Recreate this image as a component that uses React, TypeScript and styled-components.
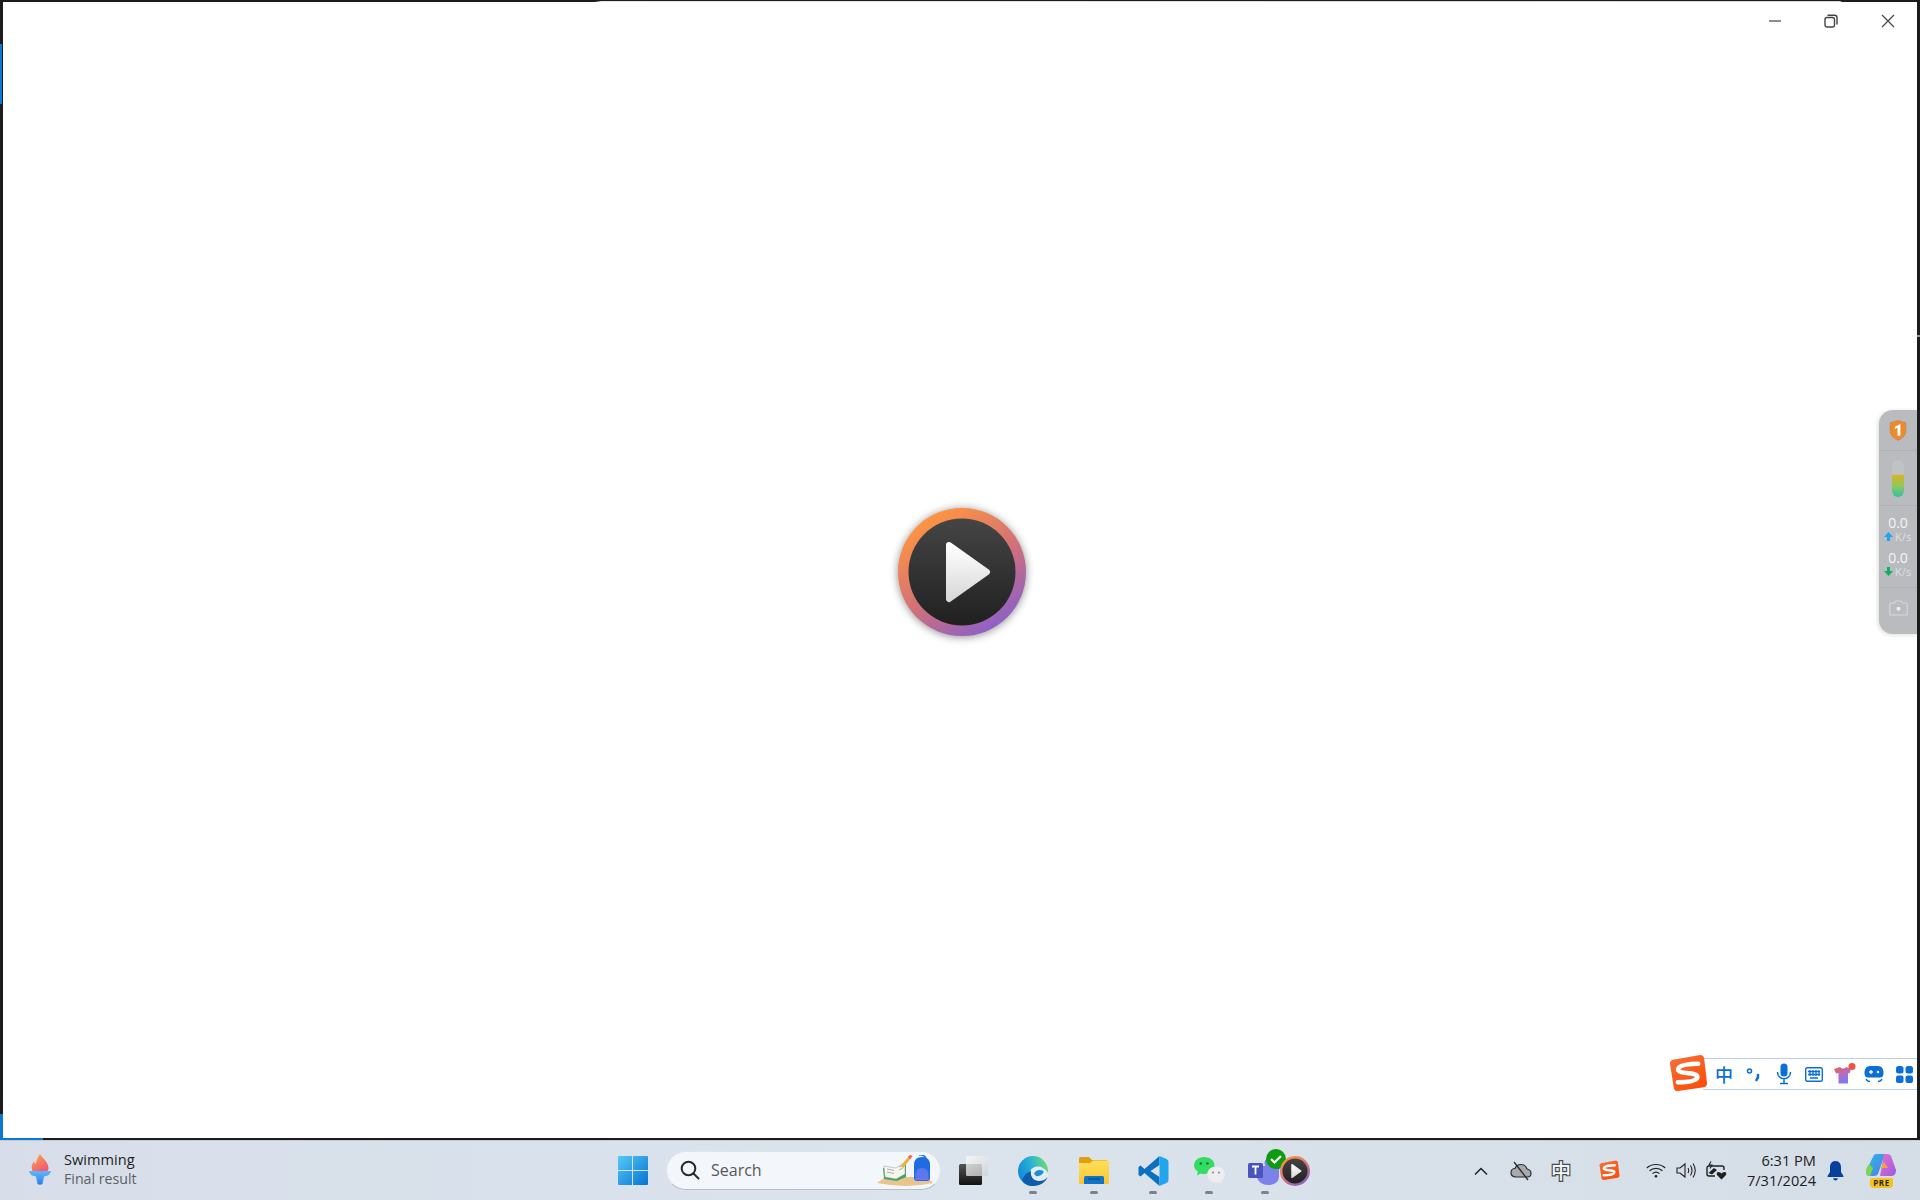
import { useId } from 'react';
import styled, { createGlobalStyle } from 'styled-components';

const GlobalStyle = createGlobalStyle`
  html, body { margin: 0; padding: 0; height: 100%; overflow: hidden; background: #fff; }
  #root { height: 100%; }
  * { box-sizing: border-box; }
`;

const Page = styled.div`
  height: 1200px;
  display: flex;
  flex-direction: column;
  font-family: "Open Sans", "Noto Sans", "Liberation Sans", sans-serif;
`;

const Window = styled.main`
  position: relative;
  height: 1140px;
  display: flex;
  flex-direction: column;
  background: #fff;
  border-style: solid;
  border-color: #1c1c1c;
  border-width: 2px 3px 2px 3px;
`;

const TitleRow = styled.div`
  height: 38px;
  display: flex;
  justify-content: flex-end;
  padding-right: 1px;
`;

const WinButton = styled.button`
  width: 56.5px;
  border: 0;
  padding: 0;
  background: none;
  display: flex;
  align-items: center;
  justify-content: center;
  color: #444;
`;

const Stage = styled.div`
  flex: 1;
  display: flex;
  align-items: center;
  justify-content: center;
  padding: 0 0 34px 4px;
`;

const PlaySvg = styled.svg<{ $shadow?: boolean }>`
  display: block;
  overflow: visible;
  ${(p) => (p.$shadow ? 'filter: drop-shadow(0 1px 4px rgba(0, 0, 0, 0.45));' : '')}
`;

const TopSheen = styled.div`
  position: absolute;
  top: -1px;
  left: 592px;
  right: 0;
  height: 1px;
  background: linear-gradient(90deg, #1c1c1c 0, #e6e6e6 6px, #d8d8d8 1245px, #1c1c1c 1247px);
`;

const FocusBarLeft = styled.div`
  position: absolute;
  left: -3px;
  top: 42px;
  width: 2px;
  height: 60px;
  background: #0a78d7;
`;

const CornerLeft = styled.div`
  position: absolute;
  left: -3px;
  top: 1112px;
  width: 3px;
  height: 24px;
  background: #0a78d7;
`;

const CornerBottom = styled.div`
  position: absolute;
  left: -3px;
  bottom: -2px;
  width: 43px;
  height: 2px;
  background: #0a78d7;
`;

const RightTick = styled.div`
  position: absolute;
  right: -3px;
  top: 333px;
  width: 3px;
  height: 2px;
  background: #999;
`;

const SidePanel = styled.aside`
  position: absolute;
  top: 408px;
  right: 0;
  width: 38px;
  height: 224px;
  background: #b9bbbf;
  border-radius: 14px 0 0 14px;
  box-shadow: -1px 1px 4px rgba(0, 0, 0, 0.14);
  display: flex;
  flex-direction: column;
  overflow: hidden;
`;

const SideSection = styled.div<{ $h: number; $pb?: number; $last?: boolean }>`
  height: ${(p) => p.$h}px;
  flex: none;
  display: flex;
  flex-direction: column;
  align-items: center;
  justify-content: center;
  padding-bottom: ${(p) => p.$pb ?? 0}px;
  border-bottom: ${(p) => (p.$last ? '0' : '1px solid #adb3b5')};
`;

const Thermo = styled.div`
  width: 12px;
  height: 37px;
  border-radius: 6px;
  background: linear-gradient(180deg, #c0c2c6 0 39%, #dcb224 40%, #8fc85a 70%, #2fc3a8 100%);
`;

const Speed = styled.div`
  width: 100%;
  display: flex;
  flex-direction: column;
  align-items: center;
  color: #f6f6f6;
  font-size: 14px;
  line-height: 15px;
  margin-top: 7px;
`;

const Unit = styled.div`
  display: flex;
  align-items: center;
  gap: 2px;
  color: #dcdee1;
  font-size: 11.5px;
  line-height: 13px;
  white-space: nowrap;
  margin-left: -1px;
`;

const ImeBar = styled.div`
  position: absolute;
  right: 0;
  top: 1056px;
  width: 214px;
  height: 32px;
  background: #fff;
  border-style: solid;
  border-color: #c0d0e4;
  border-width: 1px 0;
  display: flex;
  align-items: center;
  padding-left: 6px;
  color: #0a6fd6;
`;

const ImeLogo = styled.div`
  position: absolute;
  left: -34px;
  top: -5px;
  width: 39px;
  height: 37px;
`;

const ImeSlot = styled.div`
  width: 30px;
  flex: none;
  display: flex;
  align-items: center;
  justify-content: center;
  position: relative;
`;

const ImeChar = styled.span`
  font-family: "Noto Sans CJK SC", "Noto Sans", sans-serif;
  font-size: 18px;
  font-weight: 500;
  line-height: 20px;
  color: #0a6fd6;
`;

const Taskbar = styled.footer`
  height: 60px;
  display: flex;
  align-items: stretch;
  background: linear-gradient(90deg, #d8dee9 0%, #d9e2ec 30%, #dbe3ec 50%, #d5dee7 100%);
  border-top: 1px solid #c6cbd2;
`;

const Widget = styled.div`
  width: 610px;
  flex: none;
  display: flex;
  align-items: center;
  gap: 13px;
  padding: 0 0 3px 29px;
`;

const WidgetText = styled.div`
  display: flex;
  flex-direction: column;
`;

const WidgetTitle = styled.span`
  font-size: 14.6px;
  line-height: 20px;
  color: #1d1f22;
`;

const WidgetSub = styled.span`
  font-size: 14.2px;
  line-height: 20px;
  color: #5c6066;
`;

const Slot = styled.div<{ $w: number; $mr?: number }>`
  position: relative;
  width: ${(p) => p.$w}px;
  margin-right: ${(p) => p.$mr ?? 0}px;
  flex: none;
  display: flex;
  align-items: center;
  justify-content: center;
`;

const Running = styled.span`
  position: absolute;
  bottom: 6px;
  left: 50%;
  margin-left: -4px;
  width: 8px;
  height: 3px;
  border-radius: 2px;
  background: #7d828a;
`;

const SearchBox = styled.div`
  width: 275px;
  height: 39px;
  flex: none;
  align-self: center;
  margin: 0 4px 1px 10px;
  border-radius: 20px;
  background: #f3f6fa;
  border: 1px solid #dfe4ea;
  border-bottom-color: #b9bfc7;
  display: flex;
  align-items: center;
  padding-left: 13px;
  gap: 11px;
  position: relative;
  color: #2a2a2a;
`;

const SearchLabel = styled.span`
  font-size: 16px;
  color: #55585c;
`;

const SearchArt = styled.div`
  position: absolute;
  right: 6px;
  top: 3px;
  width: 58px;
  height: 32px;
`;

const OverIcon = styled.div<{ $x: number; $y: number }>`
  position: absolute;
  left: 50%;
  top: 50%;
  margin-left: ${(p) => p.$x}px;
  margin-top: ${(p) => p.$y}px;
  display: flex;
`;

const Tray = styled.div`
  margin-left: auto;
  display: flex;
  align-items: stretch;
  padding-right: 12px;
  color: #1f2022;
`;

const TrayChar = styled.span`
  font-family: "Noto Sans CJK SC", "Noto Sans", sans-serif;
  font-size: 20px;
  font-weight: 500;
  line-height: 22px;
  color: #f4f6f8;
  -webkit-text-stroke: 2.4px #4a4a4a;
  paint-order: stroke fill;
`;

const Clock = styled.div`
  width: 85px;
  flex: none;
  display: flex;
  flex-direction: column;
  justify-content: center;
  align-items: flex-end;
  padding-bottom: 2px;
  font-size: 14.6px;
  line-height: 20px;
  color: #1f2022;
`;

const Badge = styled.span`
  position: absolute;
  left: 50%;
  top: 37px;
  margin-left: -11px;
  width: 23px;
  height: 10px;
  border-radius: 2px 2px 4px 4px;
  background: #f7c11c;
  color: #2a2a2a;
  font-size: 8px;
  font-weight: 700;
  line-height: 10px;
  letter-spacing: 0.5px;
  text-align: center;
`;

const PlayIcon = ({ size, shadow }: { size: number; shadow?: boolean }) => {
  const id = useId();
  return (
    <PlaySvg $shadow={shadow} width={size} height={size} viewBox="0 0 128 128">
      <defs>
        <linearGradient id={`${id}r`} x1="0.2" y1="0.08" x2="0.75" y2="0.95">
          <stop offset="0" stopColor="#ff9540" />
          <stop offset="0.55" stopColor="#d0707a" />
          <stop offset="1" stopColor="#8d60c8" />
        </linearGradient>
        <linearGradient id={`${id}d`} x1="0" y1="0" x2="0" y2="1">
          <stop offset="0" stopColor="#454545" />
          <stop offset="1" stopColor="#202020" />
        </linearGradient>
        <linearGradient id={`${id}t`} x1="0" y1="0" x2="0" y2="1">
          <stop offset="0" stopColor="#ffffff" />
          <stop offset="1" stopColor="#d8d8d8" />
        </linearGradient>
      </defs>
      <circle cx="64" cy="64" r="64" fill={`url(#${id}r)`} />
      <circle cx="64" cy="64" r="53.5" fill={`url(#${id}d)`} />
      <path
        d="M51 37 L89 64 L51 91 Z"
        fill={`url(#${id}t)`}
        stroke={`url(#${id}t)`}
        strokeWidth="6"
        strokeLinejoin="round"
      />
    </PlaySvg>
  );
};

const SogouLogo = ({ size }: { size: number }) => (
  <svg width={size} height={size} viewBox="0 0 40 40">
    <defs>
      <linearGradient id="sogou" x1="0" y1="0" x2="0.6" y2="1">
        <stop offset="0" stopColor="#f6713a" />
        <stop offset="1" stopColor="#fb4f0c" />
      </linearGradient>
    </defs>
    <path d="M4 6 L32 1 Q35 1 36 4 L39 30 Q39 33 36 34 L9 38 Q6 38 5 35 L1 10 Q1 7 4 6 Z" fill="url(#sogou)" />
    <path
      d="M30 10 C22 10 13 11 10 14 C8 17 11 19 18 19.5 C25 20 30 21 29 24.5 C27 28 18 29 9 29"
      fill="none"
      stroke="#fff"
      strokeWidth="4.6"
      strokeLinecap="round"
    />
  </svg>
);

const App = () => (
  <>
    <GlobalStyle />
    <Page>
      <Window>
        <TopSheen />
        <FocusBarLeft />
        <CornerLeft />
        <CornerBottom />
        <RightTick />
        <TitleRow>
          <WinButton>
            <svg width="14" height="14" viewBox="0 0 14 14">
              <path d="M1 7 H13" stroke="currentColor" strokeWidth="1.2" />
            </svg>
          </WinButton>
          <WinButton>
            <svg width="14" height="14" viewBox="0 0 14 14" fill="none" stroke="currentColor" strokeWidth="1.4">
              <rect x="1" y="3.5" width="9.5" height="9.5" rx="2" />
              <path d="M3.5 1.2 H10.5 Q13 1.2 13 3.7 V10.5" />
            </svg>
          </WinButton>
          <WinButton>
            <svg width="14" height="14" viewBox="0 0 14 14">
              <path d="M1 1 L13 13 M13 1 L1 13" stroke="currentColor" strokeWidth="1.2" />
            </svg>
          </WinButton>
        </TitleRow>
        <Stage>
          <PlayIcon size={128} shadow />
        </Stage>

        <SidePanel>
          <SideSection $h={41}>
            <svg width="18" height="21" viewBox="0 0 17 20">
              <path d="M1 2.5 L8.5 0.5 L16 2.5 V12 Q15 16.5 8.5 19.5 Q2 16.5 1 12 Z" fill="#ee8a2b" stroke="#b98a5a" strokeWidth="0.6" />
              <path d="M5.5 6.5 L10.8 3.8 V15 H8 V7.2 L5.5 8.8 Z" fill="#fff" />
            </svg>
          </SideSection>
          <SideSection $h={55}>
            <Thermo />
          </SideSection>
          <SideSection $h={82} $pb={7}>
            <Speed>
              0.0
              <Unit>
                <svg width="9" height="9" viewBox="0 0 9 9">
                  <path d="M4.5 0 L9 5 H6 V9 H3 V5 H0 Z" fill="#20a4f3" />
                </svg>
                K/s
              </Unit>
            </Speed>
            <Speed>
              0.0
              <Unit>
                <svg width="9" height="9" viewBox="0 0 9 9">
                  <path d="M4.5 9 L9 4 H6 V0 H3 V4 H0 Z" fill="#0cb25c" />
                </svg>
                K/s
              </Unit>
            </Speed>
          </SideSection>
          <SideSection $h={46} $pb={6} $last>
            <svg width="19" height="16" viewBox="0 0 19 16" fill="none" stroke="#d7d9dc" strokeWidth="1.1">
              <path d="M2 3 H5.5 L7 1 H12 L13.5 3 H17 Q18.2 3 18.2 4.2 V14 Q18.2 15 17 15 H2 Q0.8 15 0.8 14 V4.2 Q0.8 3 2 3 Z" />
              <circle cx="9.5" cy="8.7" r="2" fill="#eceef0" stroke="none" />
            </svg>
          </SideSection>
        </SidePanel>

        <ImeBar>
          <ImeLogo>
            <SogouLogo size={39} />
          </ImeLogo>
          <ImeSlot>
            <ImeChar>中</ImeChar>
          </ImeSlot>
          <ImeSlot>
            <svg width="16" height="18" viewBox="0 0 16 18" fill="none" stroke="currentColor">
              <circle cx="3.5" cy="6" r="2" strokeWidth="1.5" />
              <path d="M12 10 Q12.5 12.5 10.5 15" strokeWidth="2.6" strokeLinecap="round" />
            </svg>
          </ImeSlot>
          <ImeSlot>
            <svg width="16" height="22" viewBox="0 0 16 22" fill="none" stroke="currentColor">
              <rect x="4.5" y="0.5" width="7" height="13" rx="3.5" fill="currentColor" stroke="none" />
              <path d="M1.5 9 C1.5 18 14.5 18 14.5 9 M8 16.5 V20 M4 20.5 H12" strokeWidth="1.5" />
            </svg>
          </ImeSlot>
          <ImeSlot>
            <svg width="18" height="15" viewBox="0 0 18 15" fill="none" stroke="currentColor">
              <rect x="0.7" y="0.7" width="16.6" height="13.6" rx="1.5" strokeWidth="1.4" />
              <path d="M3 4.5 H15 M3 7.5 H15 M5 11 H13 M5 3 V9 M8 3 V9 M11 3 V9 M14 3 V9" strokeWidth="1.3" />
            </svg>
          </ImeSlot>
          <ImeSlot>
            <svg width="24" height="22" viewBox="0 0 24 22">
              <defs>
                <linearGradient id="shirt" x1="0" y1="0" x2="0.5" y2="1">
                  <stop offset="0" stopColor="#ee5f4c" />
                  <stop offset="0.5" stopColor="#b96bbd" />
                  <stop offset="1" stopColor="#7d7bf4" />
                </linearGradient>
              </defs>
              <path d="M2 6 L8 4 Q11 7 14 4 L19 6 L17.5 10.5 L16 10 V20.5 H6.5 V10 L4 10.5 Z" fill="url(#shirt)" />
              <circle cx="20" cy="3.5" r="3.5" fill="#f1543a" />
            </svg>
          </ImeSlot>
          <ImeSlot>
            <svg width="20" height="18" viewBox="0 0 20 18">
              <path d="M6 1 H14 Q19 1 19.5 7 Q20 13 15 12.5 H5 Q0 13 0.5 7 Q1 1 6 1 Z" fill="currentColor" />
              <path d="M5 7 H9 M7 5 V9" stroke="#fff" strokeWidth="1.3" />
              <circle cx="14" cy="7" r="1.3" fill="#fff" />
              <path d="M2 14 Q3 16.5 6 16.5 M18 14 Q17 16.5 14 16.5" stroke="currentColor" strokeWidth="1.4" fill="none" />
            </svg>
          </ImeSlot>
          <ImeSlot>
            <svg width="17" height="17" viewBox="0 0 17 17" fill="currentColor">
              <rect x="0" y="0" width="7.5" height="7.5" rx="2.5" />
              <rect x="9.5" y="0" width="7.5" height="7.5" rx="2.5" />
              <rect x="0" y="9.5" width="7.5" height="7.5" rx="2" />
              <rect x="9.5" y="9.5" width="7.5" height="7.5" rx="2" />
            </svg>
          </ImeSlot>
        </ImeBar>
      </Window>

      <Taskbar>
        <Widget>
          <svg width="22" height="31" viewBox="0 0 22 31">
            <defs>
              <linearGradient id="flame" x1="0" y1="0" x2="0.6" y2="1">
                <stop offset="0" stopColor="#fbb034" />
                <stop offset="1" stopColor="#f4587a" />
              </linearGradient>
              <linearGradient id="cup" x1="0" y1="0" x2="0" y2="1">
                <stop offset="0" stopColor="#5fb8fb" />
                <stop offset="1" stopColor="#2d7fe8" />
              </linearGradient>
            </defs>
            <path d="M11 0 C13 4 19 7 19.5 14 C19.5 15.5 19 16.5 18.5 17 H3.5 C2 14 2.5 10 5 7.5 C5.5 9 6 9.5 7 10 C7 6 9 3 11 0 Z" fill="url(#flame)" />
            <path d="M0 17 H22 C21.5 20.5 18 22 15 22.5 L13.5 30 Q11 31.5 8.5 30 L7 22.5 C4 22 0.5 20.5 0 17 Z" fill="url(#cup)" />
          </svg>
          <WidgetText>
            <WidgetTitle>Swimming</WidgetTitle>
            <WidgetSub>Final result</WidgetSub>
          </WidgetText>
        </Widget>

        <Slot $w={46}>
          <svg width="30" height="30" viewBox="0 0 30 30">
            <defs>
              <linearGradient id="win" x1="0" y1="0" x2="1" y2="1">
                <stop offset="0" stopColor="#56c9f8" />
                <stop offset="1" stopColor="#0673cf" />
              </linearGradient>
            </defs>
            <path d="M0 1 Q0 0 1 0 H14 V14 H0 Z M15 0 H29 Q30 0 30 1 V14 H15 Z M0 15 H14 V29 H1 Q0 29 0 28 Z M15 15 H30 V28 Q30 29 29 29 H15 Z" fill="url(#win)" />
          </svg>
        </Slot>

        <SearchBox>
          <svg width="20" height="20" viewBox="0 0 20 20" fill="none" stroke="currentColor" strokeWidth="2">
            <circle cx="8.5" cy="8.5" r="6.8" />
            <path d="M13.5 13.5 L18.5 18.5" strokeLinecap="round" />
          </svg>
          <SearchLabel>Search</SearchLabel>
          <SearchArt>
            <svg width="58" height="32" viewBox="0 0 58 32">
              <path d="M1 28 Q8 22 14 22 H48 Q54 24 57 28 Q30 34 1 28 Z" fill="#e8c58f" />
              <path d="M7 13 L20 15 L30 9 L30 22 L21 26 L8 24 Z" fill="#3fa564" />
              <path d="M8 11 L20 13 L29 7 L29 19 L20 24 L9 22 Z" fill="#f4f5ee" stroke="#9aa096" strokeWidth="0.5" />
              <path d="M11 14 L18 15.5 M11 17 L18 18.5 M23 12 L27 10 M23 15 L27 13" stroke="#9aa096" strokeWidth="0.8" />
              <path d="M26 12 L34 2" stroke="#f0b23e" strokeWidth="3" />
              <path d="M33 3 L35.5 0.5" stroke="#ef6a5a" strokeWidth="3" />
              <path d="M43 0 Q47 -1 50 3" fill="none" stroke="#1f6fe0" strokeWidth="1.4" />
              <path d="M38 10 Q38 2 46 2 Q54 2 54 10 V23 Q54 26 51 26 H41 Q38 26 38 23 Z" fill="#1d6de0" />
              <path d="M39.5 20 Q39.5 13 46 13 Q52.5 13 52.5 20 V24 H39.5 Z" fill="#5b78ee" />
              <path d="M39.5 24 H52.5 V25 H39.5 Z" fill="#8d6cf0" />
            </svg>
          </SearchArt>
        </SearchBox>

        <Slot $w={58}>
          <svg width="30" height="29" viewBox="0 0 30 29">
            <defs>
              <linearGradient id="tvdark" x1="0" y1="0" x2="0" y2="1">
                <stop offset="0" stopColor="#555" />
                <stop offset="1" stopColor="#111" />
              </linearGradient>
              <linearGradient id="tvlight" x1="0" y1="0" x2="1" y2="1">
                <stop offset="0" stopColor="#fafafa" />
                <stop offset="1" stopColor="#cfd2d6" />
              </linearGradient>
            </defs>
            <rect x="0" y="8" width="23" height="21" rx="1.5" fill="url(#tvdark)" />
            <rect x="7" y="0" width="22" height="20" rx="1.5" fill="url(#tvlight)" opacity="0.78" />
          </svg>
        </Slot>

        <Slot $w={60}>
          <svg width="30" height="30" viewBox="0 0 30 30">
            <defs>
              <linearGradient id="edge" x1="0" y1="0.7" x2="1" y2="0.3">
                <stop offset="0" stopColor="#0f86d8" />
                <stop offset="0.55" stopColor="#2bb3d6" />
                <stop offset="1" stopColor="#6fdc72" />
              </linearGradient>
            </defs>
            <circle cx="15" cy="15" r="15" fill="url(#edge)" />
            <path d="M12 17 C12 11 20 9 25 12 C28 14 30 16 30 18 V22 L22 28 C15 27 12 23 12 17 Z" fill="#e4ebf2" />
            <path d="M13 15 C12 21 16 25 21 25 C24 25 27 24 29.5 21 C28 26 22 30 15 30 C10 30 6 28 4 24 C6 19 9 16 13 15 Z" fill="#0c5ea8" />
            <path d="M16 18 C17 14 22 13 25.5 15 C26 18 21 21 18 20 Z" fill="#1b8fd8" />
          </svg>
          <Running />
        </Slot>

        <Slot $w={62}>
          <svg width="30" height="27" viewBox="0 0 30 27">
            <defs>
              <linearGradient id="folder" x1="0" y1="0" x2="0" y2="1">
                <stop offset="0" stopColor="#ffdf5f" />
                <stop offset="1" stopColor="#fbc530" />
              </linearGradient>
            </defs>
            <path d="M0 1.5 Q0 0 1.5 0 H10 L13 3 H28 V8 H0 Z" fill="#e0a008" />
            <path d="M0 6 H11 L14 3.5 H29 Q30 3.5 30 5 V26 Q30 27 29 27 H1 Q0 27 0 26 Z" fill="url(#folder)" />
            <path d="M5 27 V20.5 Q5 19 6.5 19 H23.5 Q25 19 25 20.5 V27 Z" fill="#0f75c4" />
            <path d="M9 22 H21" stroke="#064e92" strokeWidth="1.4" />
          </svg>
          <Running />
        </Slot>

        <Slot $w={56}>
          <svg width="31" height="30" viewBox="0 0 30 30">
            <path d="M21 0 L6 13 L2 9.5 L0 11 V19 L2 20.5 L6 17 L21 30 V21 L12 15 L21 9 Z" fill="#0b70c0" />
            <path d="M21 0 L28 3 Q30 4 30 6 V24 Q30 26 28 27 L21 30 Z" fill="#22a5ee" />
          </svg>
          <Running />
        </Slot>

        <Slot $w={56}>
          <svg width="31" height="27" viewBox="0 0 31 27">
            <path d="M10 0 C16 0 20.5 3.5 20.5 8.5 C20.5 13.5 16 17 10.5 17 C9 17 8 17 6.5 16.5 L3 18.5 L3.8 14.5 C1.5 13 0 11 0 8.5 C0 3.5 4.5 0 10 0 Z" fill="#35dc62" />
            <circle cx="6.8" cy="6.5" r="1.3" fill="#177a38" />
            <circle cx="13.5" cy="6.5" r="1.3" fill="#177a38" />
            <ellipse cx="22" cy="17.5" rx="9" ry="8" fill="#eceef0" />
            <path d="M26 23 L28 26.5 L23 25 Z" fill="#eceef0" />
            <circle cx="19" cy="15.5" r="1.1" fill="#8d9094" />
            <circle cx="25" cy="15.5" r="1.1" fill="#8d9094" />
          </svg>
          <Running />
        </Slot>

        <Slot $w={56}>
          <svg width="34" height="30" viewBox="0 0 34 30">
            <circle cx="22" cy="7" r="5.5" fill="#7b83eb" />
            <path d="M9 10 H28 Q31 10 31 13 V20 Q31 29 20 29 Q12 29 9 22 Z" fill="#7b83eb" />
            <circle cx="30" cy="9" r="4" fill="#5a62c9" />
            <rect x="0" y="7" width="15" height="15" rx="1.5" fill="#4b53bc" />
            <path d="M4 10.5 H11 M7.5 10.5 V18.5" stroke="#fff" strokeWidth="1.8" />
          </svg>
          <OverIcon $x={1} $y={-22}>
            <svg width="20" height="20" viewBox="0 0 20 20">
              <circle cx="10" cy="10" r="10" fill="#0f9b0f" />
              <path d="M5 10 L8.5 13.5 L15 7" fill="none" stroke="#fff" strokeWidth="2.2" />
            </svg>
          </OverIcon>
          <OverIcon $x={15} $y={-15}>
            <PlayIcon size={30} />
          </OverIcon>
          <Running />
        </Slot>

        <Tray>
          <Slot $w={40}>
            <svg width="16" height="10" viewBox="0 0 16 10">
              <path d="M2 8.5 L8 2.5 L14 8.5" fill="none" stroke="currentColor" strokeWidth="1.5" />
            </svg>
          </Slot>
          <Slot $w={40}>
            <svg width="22" height="20" viewBox="0 0 22 20">
              <path d="M6 16 C2 16 1 13.5 1 11.5 C1 9 3 7.5 5 7.5 C6 4.5 8.5 3.5 11 3.5 C14.5 3.5 16.5 6 17 8 C19.5 8.5 21 10 21 12.5 C21 14.5 19.5 16 17.5 16 Z" fill="#a7a9ac" stroke="#2c2c2c" strokeWidth="1.2" />
              <path d="M4 1 L18 19" stroke="#2c2c2c" strokeWidth="1.3" />
            </svg>
          </Slot>
          <Slot $w={40}>
            <TrayChar>中</TrayChar>
          </Slot>
          <Slot $w={56} $mr={4}>
            <SogouLogo size={21} />
          </Slot>
          <Slot $w={30}>
            <svg width="20" height="15" viewBox="0 0 20 15" fill="none" stroke="currentColor" strokeWidth="1.2">
              <path d="M0.8 5 C5.5 0.3 14.5 0.3 19.2 5 M3.6 7.8 C7 4.6 13 4.6 16.4 7.8 M6.5 10.6 C8.5 9 11.5 9 13.5 10.6" />
              <circle cx="10" cy="13.2" r="1.3" fill="currentColor" stroke="none" />
            </svg>
          </Slot>
          <Slot $w={30}>
            <svg width="21" height="17" viewBox="0 0 21 17" fill="none" stroke="currentColor" strokeWidth="1.1">
              <path d="M1 6 H4 L9 2 V15 L4 11 H1 Z" />
              <path d="M12 6 Q13.5 8.5 12 11 M14.5 3.5 Q17.5 8.5 14.5 13.5 M17 1.5 Q21.5 8.5 17 15.5" />
            </svg>
          </Slot>
          <Slot $w={30}>
            <svg width="21" height="19" viewBox="0 0 21 19">
              <path d="M3 5 H16 Q18 5 18 7 V9 M3 5 Q1 5 1 7 V13 Q1 15 3 15 H9" fill="none" stroke="currentColor" strokeWidth="1.4" />
              <path d="M2.5 12 L8 7 L11 9 L6 13.5 Z" fill="currentColor" />
              <path d="M5 0.5 L3 4 H6 L4 7.5" fill="none" stroke="currentColor" strokeWidth="1.1" />
              <path d="M15.5 18.5 L11 14 Q10 11 12.5 11 Q14.5 11 15.5 12.5 Q16.5 11 18.5 11 Q21 11 20 14 Z" fill="currentColor" />
            </svg>
          </Slot>
          <Clock>
            <span>6:31 PM</span>
            <span>7/31/2024</span>
          </Clock>
          <Slot $w={38}>
            <svg width="17" height="20" viewBox="0 0 17 20" fill="#063f9e">
              <path d="M8.5 0 C12.5 0 14 3 14 6.5 V11 L16.5 15 Q17 16 15.5 16 H1.5 Q0 16 0.5 15 L3 11 V6.5 C3 3 4.5 0 8.5 0 Z" />
              <path d="M6 17.2 H11 Q10.3 19.5 8.5 19.5 Q6.7 19.5 6 17.2 Z" />
            </svg>
          </Slot>
          <Slot $w={54}>
            <svg width="30" height="26" viewBox="0 0 30 26" style={{ marginTop: -8 }}>
              <defs>
                <linearGradient id="copA" x1="0" y1="0" x2="1" y2="1">
                  <stop offset="0" stopColor="#2cb8e8" />
                  <stop offset="1" stopColor="#4f7fe6" />
                </linearGradient>
                <linearGradient id="copB" x1="0" y1="0" x2="1" y2="1">
                  <stop offset="0" stopColor="#e86fcf" />
                  <stop offset="1" stopColor="#9a5ce0" />
                </linearGradient>
              </defs>
              <path d="M8 1 Q9 0 11 0 H19 L12 20 Q11 22 8 22 H4 Q0 22 0 18 Q0 16 2 13 Z" fill="url(#copA)" />
              <path d="M0 18 Q0 14 3 10 L7 14 L4 22 Q0 22 0 18 Z" fill="#7fd44f" />
              <path d="M18 0 H21 Q24 0 25 2 L30 16 Q30 22 25 22 H14 Z" fill="url(#copB)" />
              <path d="M18 8 L22 14 H14.5 Z" fill="#f7a23c" />
            </svg>
            <Badge>PRE</Badge>
          </Slot>
        </Tray>
      </Taskbar>
    </Page>
  </>
);

export default App;
